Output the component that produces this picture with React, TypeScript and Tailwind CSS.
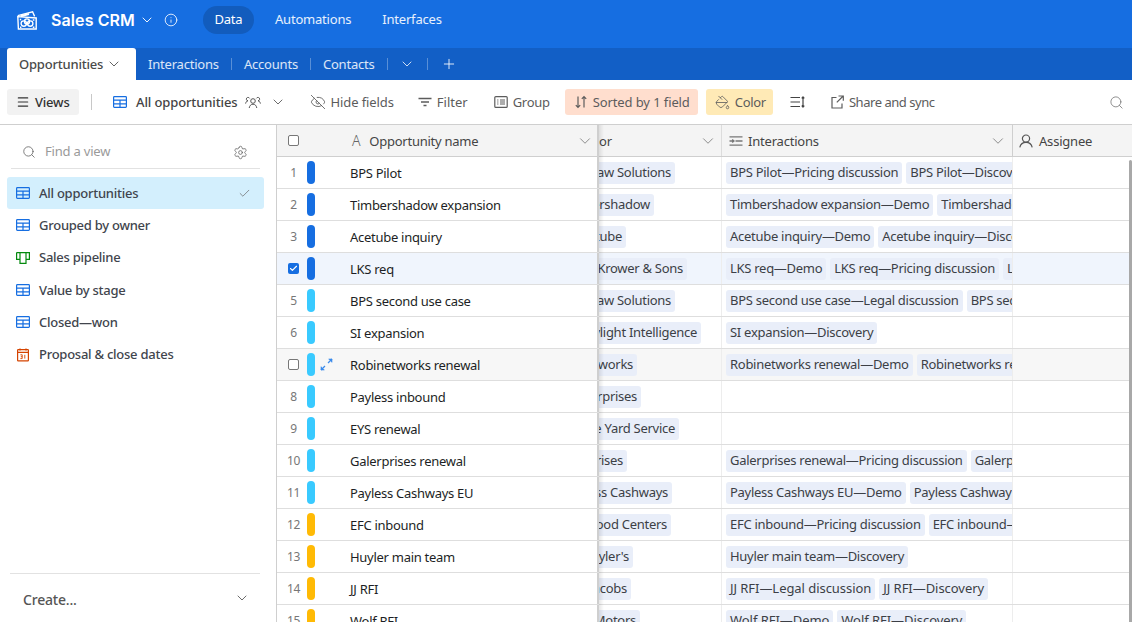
import { ChevronDown, Info, Menu, Plus, EyeOff, PaintBucket, Search, Settings, Check } from "lucide-react";

const views = [
  { name: "All opportunities", type: "grid", active: true },
  { name: "Grouped by owner", type: "grid" },
  { name: "Sales pipeline", type: "kanban" },
  { name: "Value by stage", type: "grid" },
  { name: "Closed—won", type: "grid" },
  { name: "Proposal & close dates", type: "calendar" },
];

const rows = [
  { n: "1", name: "BPS Pilot", c: "bg-[#166ee1]", acc: "Bluepaw Solutions", pr: "pr-[46px]", ints: ["BPS Pilot—Pricing discussion", "BPS Pilot—Discovery"] },
  { n: "2", name: "Timbershadow expansion", c: "bg-[#166ee1]", acc: "Timbershadow", pr: "pr-[67px]", ints: ["Timbershadow expansion—Demo", "Timbershadow expansion—Discovery"] },
  { n: "3", name: "Acetube inquiry", c: "bg-[#166ee1]", acc: "Acetube", pr: "pr-[95px]", ints: ["Acetube inquiry—Demo", "Acetube inquiry—Discovery"] },
  { n: "", name: "LKS req", c: "bg-[#166ee1]", acc: "Lee Krower & Sons", pr: "pr-[34px]", ints: ["LKS req—Demo", "LKS req—Pricing discussion", "LKS req—Discovery"], selected: true },
  { n: "5", name: "BPS second use case", c: "bg-[#39caff]", acc: "Bluepaw Solutions", pr: "pr-[46px]", ints: ["BPS second use case—Legal discussion", "BPS second use case—Demo"] },
  { n: "6", name: "SI expansion", c: "bg-[#39caff]", acc: "Skylight Intelligence", pr: "pr-[20px]", ints: ["SI expansion—Discovery"] },
  { n: "", name: "Robinetworks renewal", c: "bg-[#39caff]", acc: "Robinetworks", pr: "pr-[84px]", ints: ["Robinetworks renewal—Demo", "Robinetworks renewal—Discovery"], hover: true },
  { n: "8", name: "Payless inbound", c: "bg-[#39caff]", acc: "Payless Enterprises", pr: "pr-[80px]", ints: [] },
  { n: "9", name: "EYS renewal", c: "bg-[#39caff]", acc: "Eye Yard Service", pr: "pr-[42px]", ints: [] },
  { n: "10", name: "Galerprises renewal", c: "bg-[#39caff]", acc: "Galerprises", pr: "pr-[94px]", ints: ["Galerprises renewal—Pricing discussion", "Galerprises renewal—Demo"] },
  { n: "11", name: "Payless Cashways EU", c: "bg-[#39caff]", acc: "Payless Cashways", pr: "pr-[49px]", ints: ["Payless Cashways EU—Demo", "Payless Cashways EU—Discovery"] },
  { n: "12", name: "EFC inbound", c: "bg-[#ffba05]", acc: "Elmwood Food Centers", pr: "pr-[50px]", ints: ["EFC inbound—Pricing discussion", "EFC inbound—Demo"] },
  { n: "13", name: "Huyler main team", c: "bg-[#ffba05]", acc: "Huyler's", pr: "pr-[88px]", ints: ["Huyler main team—Discovery"] },
  { n: "14", name: "JJ RFI", c: "bg-[#ffba05]", acc: "JJ Jacobs", pr: "pr-[90px]", ints: ["JJ RFI—Legal discussion", "JJ RFI—Discovery"], wide: true },
  { n: "15", name: "Wolf RFI", c: "bg-[#ffba05]", acc: "Wolf Motors", pr: "pr-[81px]", ints: ["Wolf RFI—Demo", "Wolf RFI—Discovery"], wide: true },
];

function GridIcon({ className }: { className?: string }) {
  return (
    <svg viewBox="0 0 14 14" fill="none" stroke="currentColor" strokeWidth="1.2" className={className}>
      <rect x="0.6" y="1.6" width="12.8" height="10.8" rx="0.8" />
      <path d="M0.6 5.2h12.8M0.6 8.8h12.8M7 5.2v7.2" />
    </svg>
  );
}

function KanbanIcon({ className }: { className?: string }) {
  return (
    <svg viewBox="0 0 14 14" fill="none" stroke="currentColor" strokeWidth="1.2" className={className}>
      <path d="M0.6 1.6h12.8v6.7h-3.4M0.6 1.6v6.7h3.4M4 1.6v10.8h6V1.6" />
    </svg>
  );
}

function CalendarIcon({ className }: { className?: string }) {
  return (
    <svg viewBox="0 0 14 14" fill="none" stroke="currentColor" strokeWidth="1.2" className={className}>
      <rect x="1.6" y="1.6" width="10.8" height="11.2" rx="0.6" />
      <path d="M1.6 4.4h10.8M4 0.4v2.2M10 0.4v2.2" />
      <path d="M4.4 6.8h1.8v3.8H4.4M4.8 8.7h1.4M8.8 6.8v3.8" strokeWidth="0.9" />
    </svg>
  );
}

function Logo() {
  return (
    <svg viewBox="0 0 20 19" fill="none" stroke="white" strokeWidth="1.4" className="w-[20px] h-[19px]">
      <path d="M0.8 4.6 15.6 0.8l2 4.6" />
      <path d="M3.6 5.2 12 3" strokeWidth="2" />
      <path d="M0.8 5.6 19.2 7v11H1.4z" />
      <circle cx="6.8" cy="12.6" r="2.7" />
      <circle cx="13.2" cy="12.6" r="2.7" />
      <circle cx="10" cy="10.4" r="2.5" />
      <path d="M2.8 8.6h1.4M15.8 16.2h1.6M3 16.2h1.4M15.8 9h1.6" strokeWidth="1.5" />
    </svg>
  );
}

function PeopleIcon() {
  return (
    <svg viewBox="0 0 16 14" fill="none" stroke="#555" strokeWidth="1" className="w-[16px] h-[14px] ml-[8px]">
      <circle cx="8" cy="6" r="2.3" />
      <path d="M4.2 13c.4-2.4 1.8-3.8 3.8-3.8s3.4 1.4 3.8 3.8" />
      <path d="M4.6 3.4a1.7 1.7 0 1 0-1.6 2.4c-1.5.3-2.2 1.4-2.4 2.8M11.4 3.4a1.7 1.7 0 1 1 1.6 2.4c1.5.3 2.2 1.4 2.4 2.8" />
    </svg>
  );
}

function FilterIcon() {
  return (
    <svg viewBox="0 0 14 14" fill="none" stroke="currentColor" strokeWidth="1.3" className="w-[14px] h-[14px]">
      <path d="M0.5 3.5h13M3 7h8M5.5 10.5h3" />
    </svg>
  );
}

function GroupIcon() {
  return (
    <svg viewBox="0 0 14 14" fill="none" stroke="currentColor" strokeWidth="1.2" className="w-[14px] h-[14px]">
      <rect x="0.8" y="1.6" width="12.4" height="10.8" rx="1" />
      <path d="M3.2 5h1.2M6 5h5M3.2 7h1.2M6 7h5M3.2 9h1.2M6 9h5" />
    </svg>
  );
}

function SortIcon() {
  return (
    <svg viewBox="0 0 12 14" fill="none" stroke="currentColor" strokeWidth="1.2" className="w-[12px] h-[14px]">
      <path d="M3 1.5v11M0.8 10.2 3 12.5l2.2-2.3M9 12.5v-11M6.8 3.8 9 1.5l2.2 2.3" />
    </svg>
  );
}

function RowHeightIcon() {
  return (
    <svg viewBox="0 0 15 14" fill="none" stroke="#444" strokeWidth="1.2" className="w-[15px] h-[14px] ml-[17px]">
      <path d="M0.5 2.5h9.5M0.5 7h9.5M0.5 11.5h9.5M13 2v10M11.7 3.4 13 2l1.3 1.4M11.7 10.6 13 12l1.3-1.4" />
    </svg>
  );
}

function ShareIcon() {
  return (
    <svg viewBox="0 0 13 14" fill="none" stroke="currentColor" strokeWidth="1.2" className="w-[13px] h-[14px]">
      <path d="M5.5 2.5H1v10.5h10V8.5M7.5 1h4.8v4.8M12.2 1 5.8 7.4" />
    </svg>
  );
}

function LinkedIcon() {
  return (
    <svg viewBox="0 0 14 14" fill="none" stroke="#777" strokeWidth="1.3" className="w-[14px] h-[14px]">
      <path d="M0.5 2.8h13M6.5 7h7M0.5 11.2h13M0.5 7h4M3.2 5.4 5 7 3.2 8.6" />
    </svg>
  );
}

function ExpandIcon() {
  return (
    <svg viewBox="0 0 13 13" fill="none" stroke="#3b8beb" strokeWidth="1.2" className="absolute left-[43px] top-[9px] w-[13px] h-[13px]">
      <path d="M1 12l4-4M12 1 8 5" />
      <path d="M1 8.5V12h3.5M8.5 1H12v3.5" fill="#3b8beb" strokeWidth="0.6" />
    </svg>
  );
}

function UserIcon() {
  return (
    <svg viewBox="0 0 14 14" fill="none" stroke="#555" strokeWidth="1.2" className="w-[14px] h-[14px]">
      <circle cx="7" cy="4.6" r="3.6" />
      <path d="M0.8 13.4c.7-3 3-5 6.2-5s5.5 2 6.2 5" />
    </svg>
  );
}

function Tool({ icon, label, className = "" }: { icon: React.ReactNode; label: string; className?: string }) {
  return (
    <div className={`flex items-center h-[26px] text-[13px] text-[#5c5c5c] ${className}`}>
      {icon}
      <span className="pt-[1px]">{label}</span>
    </div>
  );
}

export default function App() {
  return (
    <div className="w-[1132px] h-[622px] overflow-hidden flex flex-col bg-white font-['Noto_Sans',sans-serif] tracking-[-0.2px] text-[#1d1f25]">
      {/* top bar */}
      <div className="h-[48px] shrink-0 bg-[#166ee1] flex items-center pb-[8px] text-white">
        <div className="ml-[17px] mr-[14px] flex"><Logo /></div>
        <span className="font-['Inter',sans-serif] font-semibold text-[16px] tracking-[0.1px]">Sales CRM</span>
        <ChevronDown className="w-[16px] h-[16px] ml-[4px]" strokeWidth={1.4} />
        <Info className="w-[14px] h-[14px] ml-[9px]" strokeWidth={1.4} />
        <div className="ml-[25px] flex items-center text-[13px]">
          <div className="h-[28px] w-[51px] rounded-full bg-[#125cbd] flex items-center justify-center">Data</div>
          <span className="ml-[21px] text-white/90">Automations</span>
          <span className="ml-[31px] text-white/90">Interfaces</span>
        </div>
      </div>

      {/* tabs */}
      <div className="h-[32px] shrink-0 bg-[#125fc6] flex items-end text-white text-[13px]">
        <div className="ml-[7px] h-[32px] w-[129px] bg-white rounded-t-[3px] flex items-center pl-[12px] text-[#4a4a4a] font-medium">
          <span className="pt-[1px]">Opportunities</span>
          <ChevronDown className="w-[16px] h-[16px] ml-[3px]" strokeWidth={1.3} />
        </div>
        <div className="h-[32px] flex items-center text-white/85">
          <span className="ml-[12px] pt-[1px]">Interactions</span>
          <div className="w-px h-[12px] bg-white/30 ml-[12px]" />
          <span className="ml-[12px] pt-[1px]">Accounts</span>
          <div className="w-px h-[12px] bg-white/30 ml-[12px]" />
          <span className="ml-[12px] pt-[1px]">Contacts</span>
          <div className="w-px h-[12px] bg-white/30 ml-[12px]" />
          <ChevronDown className="w-[16px] h-[16px] ml-[11px]" strokeWidth={1.4} />
          <div className="w-px h-[12px] bg-white/30 ml-[12px]" />
          <Plus className="w-[16px] h-[16px] ml-[13px]" strokeWidth={1.5} />
        </div>
      </div>

      {/* toolbar */}
      <div className="h-[45px] shrink-0 border-b border-[#cfcfcf] flex items-center">
        <div className="ml-[7px] h-[26px] w-[72px] rounded-[3px] bg-[#f2f2f2] flex items-center pl-[9px] gap-[5px] text-[13px] font-medium text-[#333]">
          <Menu className="w-[14px] h-[14px]" />
          <span className="pt-[1px]">Views</span>
        </div>
        <div className="w-px h-[16px] bg-[#c8c8c8] ml-[12px]" />
        <GridIcon className="w-[14px] h-[14px] text-[#166ee1] ml-[21px]" />
        <span className="ml-[9px] pt-[1px] text-[13px] font-medium text-[#444] tracking-[-0.12px]">All opportunities</span>
        <PeopleIcon />
        <ChevronDown className="w-[16px] h-[16px] ml-[9px] text-[#555]" strokeWidth={1.3} />
        <Tool className="ml-[24px] gap-[4px] tracking-[-0.1px]" icon={<EyeOff className="w-[16px] h-[16px]" strokeWidth={1.3} />} label="Hide fields" />
        <Tool className="ml-[24px] gap-[5px] tracking-[0px]" icon={<FilterIcon />} label="Filter" />
        <Tool className="ml-[26px] gap-[5px] tracking-[-0.3px]" icon={<GroupIcon />} label="Group" />
        <Tool className="ml-[15px] gap-[6px] tracking-[-0.1px] bg-[#ffdece] rounded-[3px] pl-[10px] pr-[8px]" icon={<SortIcon />} label="Sorted by 1 field" />
        <Tool className="ml-[8px] gap-[5px] tracking-[-0.3px] bg-[#ffeab6] rounded-[3px] pl-[9px] pr-[7px]" icon={<PaintBucket className="w-[15px] h-[15px]" strokeWidth={1.3} />} label="Color" />
        <RowHeightIcon />
        <Tool className="ml-[26px] gap-[5px] tracking-[-0.47px]" icon={<ShareIcon />} label="Share and sync" />
        <Search className="w-[15px] h-[15px] ml-auto mr-[8px] text-[#777]" strokeWidth={1.3} />
      </div>

      <div className="flex-1 flex min-h-0">
        {/* sidebar */}
        <div className="w-[277px] shrink-0 border-r border-[#cfcfcf] flex flex-col">
          <div className="ml-[11px] mr-[16px] h-[44px] pt-[11px] border-b border-[#e2e2e2] flex items-center pl-[11px] pr-[12px]">
            <Search className="w-[14px] h-[14px] text-[#666]" strokeWidth={1.4} />
            <span className="ml-[9px] text-[13px] text-[#9a9a9a]">Find a view</span>
            <Settings className="w-[15px] h-[15px] ml-auto text-[#666]" strokeWidth={1.3} />
          </div>
          <div className="ml-[7px] mr-[12px] mt-[8px] flex flex-col">
            {views.map((v) => (
              <div key={v.name} className={`h-[32.3px] flex items-center pl-[9px] pr-[13px] rounded-[3px] text-[13px] font-medium text-[#41454d] tracking-[-0.25px] ${v.active ? "bg-[#d3effd]" : ""}`}>
                {v.type === "grid" && <GridIcon className="w-[14px] h-[14px] text-[#166ee1]" />}
                {v.type === "kanban" && <KanbanIcon className="w-[14px] h-[14px] text-[#048a0e]" />}
                {v.type === "calendar" && <CalendarIcon className="w-[14px] h-[14px] text-[#d54401]" />}
                <span className="ml-[9px] pt-[1px]">{v.name}</span>
                {v.active && <Check className="w-[13px] h-[13px] ml-auto text-[#666]" strokeWidth={1.3} />}
              </div>
            ))}
          </div>
          <div className="mt-auto ml-[10px] mr-[16px] h-[49px] border-t border-[#e2e2e2] flex items-center pl-[13px] pr-[10px] text-[14px] font-medium text-[#555]">
            <span className="pt-[3px]">Create...</span>
            <ChevronDown className="w-[16px] h-[16px] ml-auto" strokeWidth={1.3} />
          </div>
        </div>

        {/* grid */}
        <div className="relative flex-1 min-w-0 flex flex-col overflow-hidden">
          <div className="h-[32px] shrink-0 flex bg-[#f4f4f4] border-b border-[#cfcfcf] text-[13px] text-[#444]">
            <div className="w-[322px] shrink-0 flex items-center border-r-2 border-[#cfcfcf]">
              <div className="w-[11px] h-[11px] ml-[11px] border border-[#777] rounded-[2px] bg-white" />
              <span className="ml-[53px] text-[14px] font-light text-[#666]">A</span>
              <span className="ml-[9px] pt-[2px] tracking-[-0.25px]">Opportunity name</span>
              <ChevronDown className="w-[18px] h-[18px] ml-auto mr-[3px] text-[#777]" strokeWidth={1.1} />
            </div>
            <div className="w-[123px] shrink-0 flex items-center border-r border-[#dcdcdc]">
              <span className="pt-[2px]">or</span>
              <ChevronDown className="w-[18px] h-[18px] ml-auto mr-[4px] text-[#777]" strokeWidth={1.1} />
            </div>
            <div className="w-[291px] shrink-0 flex items-center border-r border-[#cfcfcf] pl-[7px]">
              <LinkedIcon />
              <span className="ml-[5px] pt-[2px]">Interactions</span>
              <ChevronDown className="w-[18px] h-[18px] ml-auto mr-[5px] text-[#777]" strokeWidth={1.1} />
            </div>
            <div className="flex items-center pl-[6px]">
              <UserIcon />
              <span className="ml-[6px] pt-[2px]">Assignee</span>
            </div>
          </div>
          {rows.map((r) => {
            const bg = r.selected ? "bg-[#f0f5fd]" : r.hover ? "bg-[#f7f7f7]" : "bg-white";
            return (
              <div key={r.name} className={`h-[32px] shrink-0 flex border-b border-[#dedede] text-[13px] tracking-[-0.28px] ${bg}`}>
                <div className="relative w-[322px] shrink-0 flex items-center border-r-2 border-[#cfcfcf]">
                  <div className="w-[30px] flex justify-center text-[12px] text-[#777]">
                    {r.selected ? (
                      <div className="w-[11px] h-[11px] ml-[3px] rounded-[2px] bg-[#166ee1] flex items-center justify-center">
                        <Check className="w-[9px] h-[9px] text-white" strokeWidth={3} />
                      </div>
                    ) : r.hover ? (
                      <div className="w-[11px] h-[11px] ml-[3px] border border-[#777] rounded-[2px] bg-white" />
                    ) : (
                      <span className="ml-[3px] pt-[1px]">{r.n}</span>
                    )}
                  </div>
                  <div className={`w-[8px] h-[23px] rounded-full ${r.c}`} />
                  {r.hover && <ExpandIcon />}
                  <span className="ml-[35px] pt-[2px] text-[#1d1f25]">{r.name}</span>
                </div>
                <div className={`w-[123px] shrink-0 flex items-center justify-end overflow-hidden border-r border-[#ededed] ${r.pr}`}>
                  <span className="h-[22px] shrink-0 flex items-center pl-[8px] pr-[4px] rounded-[3px] bg-[#e9eef9] text-[#3c3f46] whitespace-nowrap">{r.acc}</span>
                </div>
                <div className={`w-[291px] shrink-0 flex items-center gap-[4px] pl-[4px] overflow-hidden border-r border-[#ededed] ${r.wide ? "tracking-[-0.05px]" : ""}`}>
                  {r.ints.map((t) => (
                    <span key={t} className="h-[22px] shrink-0 flex items-center px-[4px] rounded-[3px] bg-[#e9eef9] text-[#3c3f46] whitespace-nowrap">{t}</span>
                  ))}
                </div>
                <div className="flex-1" />
              </div>
            );
          })}
          {/* frozen column shadow and scrollbar overlay */}
          <div className="absolute left-[322px] top-0 bottom-0 w-[5px] bg-linear-to-r from-[#00000018] to-transparent" />
          <div className="absolute right-0 top-[35px] bottom-0 w-[3px] rounded-t-[2px] bg-[#a8a8a8]" />
        </div>
      </div>
    </div>
  );
}
